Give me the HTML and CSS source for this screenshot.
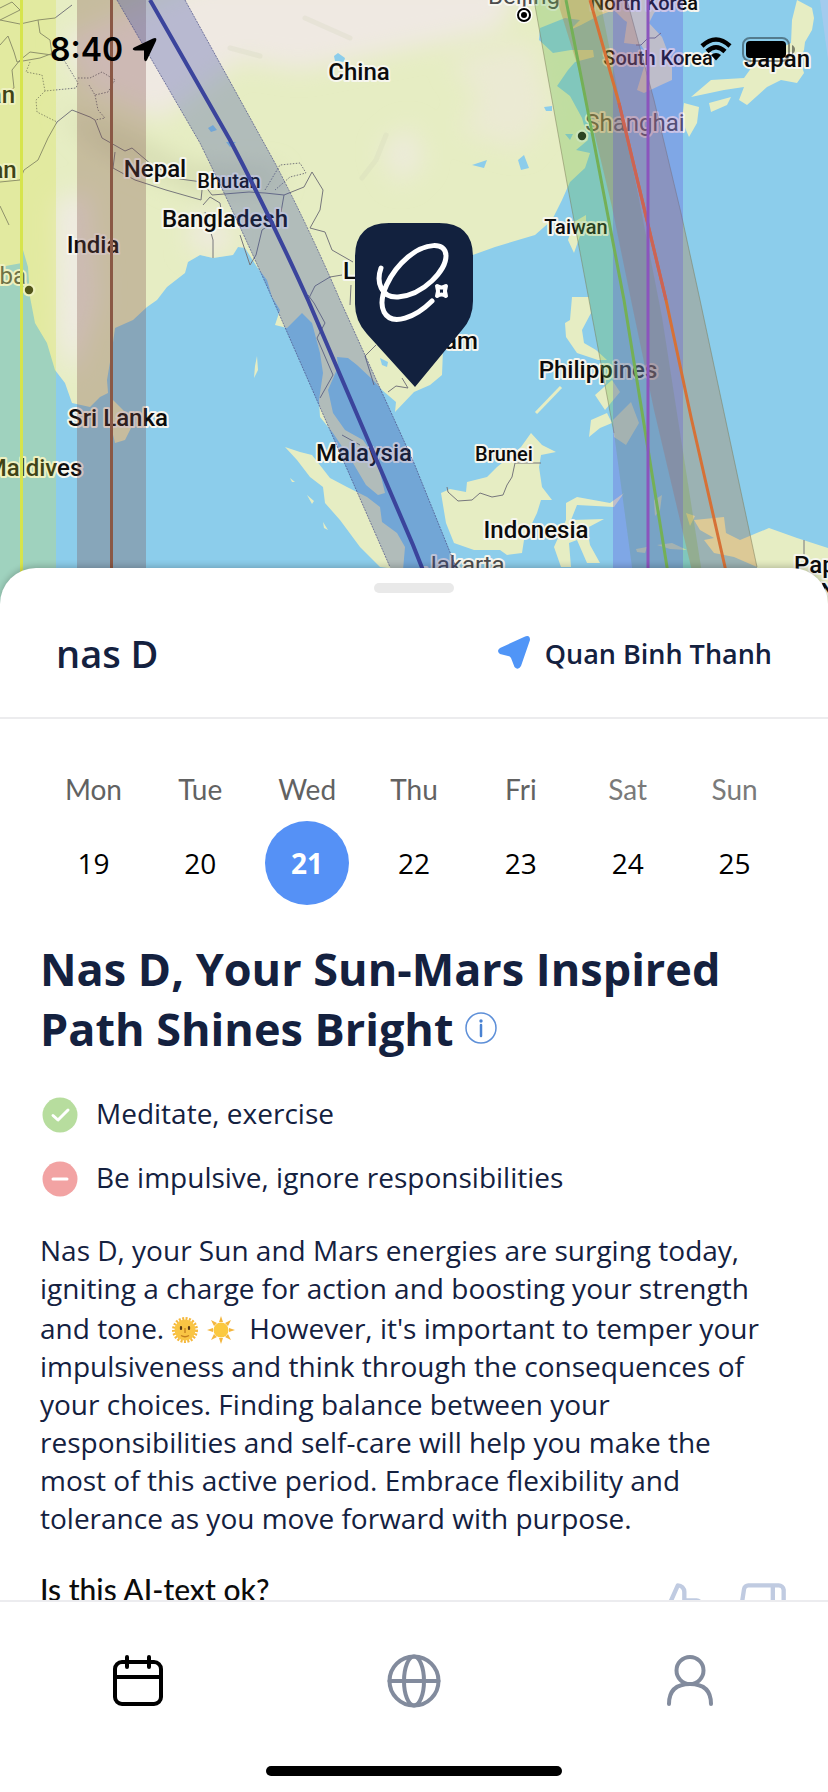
FILE: index.html
```html
<!DOCTYPE html>
<html lang="en">
<head>
<meta charset="utf-8">
<meta name="viewport" content="width=device-width, initial-scale=1">
<title>Daily map</title>
<link rel="stylesheet" href="styles.css">
</head>
<body>
<div class="screen">
  <div class="map">
    <svg class="map-art" viewBox="0 0 828 608" preserveAspectRatio="xMidYMin slice" role="img" aria-label="Map of Asia with planetary lines">
      <defs>
        <filter id="soft" x="-20%" y="-20%" width="140%" height="140%"><feGaussianBlur stdDeviation="12"/></filter>
        <clipPath id="land">
          <path d="M0 0H600L614 10 600 15 581 25 570 30 580 20 565 18 540 28 539 40 553 53 571 50 593 50 594 57 575 62 568 70 557 86 570 96 582 118 588 140 576 150 590 153 585 168 570 182 562 200 552 220 535 235 495 247 470 256 430 260 420 290 443 350 442 375 430 385 414 392 395 412 396 402 382 390 373 380 357 365 348 358 337 357 338 367 328 390 333 413 345 430 363 440 377 460 385 493 378 495 366 485 353 463 333 433 320 417 319 400 323 373 320 353 312 323 302 313 287 328 275 325 280 310 272 297 267 280 257 267 245 248 238 247 233 255 213 258 200 255 188 262 185 273 167 287 157 300 147 307 133 320 115 328 112 350 107 380 108 393 100 397 90 407 72 403 65 383 55 370 47 343 35 323 30 297 28 267 23 250 22 263 0 267Z"/>
        </clipPath>
      </defs>
      <rect width="828" height="608" fill="#8ccdeb"/>
      <g clip-path="url(#land)">
        <rect width="828" height="608" fill="#e6edc3"/>
        <g filter="url(#soft)">
          <path d="M200-20H520L500 30 400 50 300 70 240 60 160 120 90 90 60 40Z" fill="#efe9e2"/>
          <path d="M450 60 530 40 550 110 520 150 460 130 480 100Z" fill="#ebead3"/>
          <path d="M380 150 410 125 425 160 400 185Z" fill="#edebdb"/>
          <path d="M55 200 90 190 100 300 75 380 58 340Z" fill="#efebe2"/>
          <path d="M190 215 230 220 230 255 190 250Z" fill="#eeeade"/>
          <path d="M60 110 100 150 200 195 280 185 275 170 190 165 120 130Z" fill="#d6dcb2"/>
        </g>
        <path d="M305 18 350 38 M386 135 376 160 362 178 M230 48 260 56" fill="none" stroke="#cfd2b8" stroke-width="5" opacity=".25" stroke-linecap="round"/>
      </g>
      <g fill="#e6edc3">
        <path d="M600 0 614 10 624 20 627 22 624 43 641 45 646 53 644 67 637 90 644 93 661 85 672 80 672 63 662 37 649 23 654 13 667 0Z"/>
        <path d="M797 0 812 8 814 18 812 30 805 42 804 50 800 60 804 73 797 83 781 80 767 87 747 105 739 100 744 87 724 90 691 97 711 80 744 78 757 60 791 43 792 20Z"/>
        <path d="M684 103 699 107 697 123 689 137 686 130 682 120ZM709 103 731 97 727 105 711 112Z"/>
        <path d="M586 215 586 225 581 233 574 253 568 240 574 222Z"/>
        <path d="M113 400 125 412 131 428 125 440 115 443 112 430Z"/>
        <path d="M285 447 300 452 312 455 330 478 347 487 367 497 380 507 382 522 397 533 405 547 403 570 380 567 360 547 340 520 325 503 323 487 310 477 297 460Z"/>
        <path d="M441 493 446 523 454 543 474 550 500 550 507 555 522 553 524 540 537 513 541 500 552 500 542 487 539 467 541 455 556 452 542 445 531 433 521 447 497 467 487 477 467 482 466 492 450 489Z"/>
        <path d="M572 297 589 297 591 313 582 330 584 343 596 350 607 360 598 360 577 353 566 337 565 323 570 320ZM591 420 607 413 612 423 600 428 589 437ZM613 420 631 402 639 423 626 445 614 437ZM595 395 612 380 620 392 605 410Z"/>
        <path d="M566 503 577 497 610 503 624 493 614 507 577 505 571 520 604 519 587 528 590 545 600 563 587 563 577 540 569 543 571 567 561 567 554 547 566 520Z"/>
        <path d="M694 520 724 517 726 533 740 540 769 528 797 538 828 548V608H757L757 567 734 557 714 553 704 540 714 538 700 530Z"/>
        <path d="M657 545 672 543 687 550 670 549ZM636 549 647 547 645 553 637 552ZM654 500 662 495 660 510 655 516ZM686 513 695 516 690 526Z"/>
        <path d="M290 478 295 482 292 482ZM307 495 314 501 312 504ZM323 522 328 530 324 528ZM257 356 258 370 254 378 255 366Z"/>
      </g>
      <path d="M561 387 536 413" stroke="#e6edc3" stroke-width="3"/>
      <g fill="#8ccdeb">
        <path d="M334 56 338 53 345 58 344 62 335 61ZM208 128 213 125 217 130 211 132ZM226 142 236 142 230 147ZM518 160 524 155 529 168 521 170ZM472 165 487 160 484 168ZM544 107 552 106 552 111 546 111ZM565 134 573 134 570 140ZM380 358 388 362 387 367 382 365Z"/>
      </g>
      <g fill="none" stroke="#77777c" stroke-width="1">
        <path d="M0 8 12 2 20 10 0 20 20 24 38 20 55 18 72 5M38 20 40 33 50 40 52 55 30 52 20 60 12 70 14 88 4 92M0 45 8 36 14 52 17 62 40 58 56 52"/>
        <path d="M57 122 72 110 90 117 95 120 102 138 125 151 132 148 152 165 180 179 202 182 212 195 249 192 265 193M57 122 48 138 38 160 24 170 20 180 0 182M115 152 113 168 135 180 166 190 201 200 203 180M203 205 210 197 220 203 222 215M205 212 213 240 213 258M0 206 9 225"/>
        <path d="M265 193 284 195 304 187 312 172 323 190 320 210 310 228 325 232 332 250 353 262M284 195 280 218 262 230 256 255 250 265 240 235M308 300 315 286 330 277 342 275M351 285 350 305M308 295 314 303 325 323 317 338 333 375 320 398M342 435 360 445M365 356 376 345M365 356 374 385M388 392 396 386 408 388 402 378"/>
        <path d="M447 487 448 492 458 501 472 500 480 493 492 497 503 495 507 485 512 477 515 463 541 463M804 540V567M636 45 641 45 648 38 655 38 661 33"/>
        <path d="M64 60 78 83 76 88 45 91 36 100 37 112 57 122M78 78 90 78 102 72 115 80 108 92 95 95 89 85M95 95 98 110 105 118 95 120M45 91 42 75 26 72 30 62M265 190 280 165 300 163 306 173 290 177 275 190" stroke-dasharray="1.5 1.5"/>
      </g>
      <g class="map-labels">
        <text x="359" y="80">China</text>
        <text x="155" y="177">Nepal</text>
        <text class="small" x="229" y="188">Bhutan</text>
        <text x="225" y="227">Bangladesh</text>
        <text x="93" y="253">India</text>
        <text x="369" y="279">Laos</text>
        <text x="433" y="349">Vietnam</text>
        <text x="118" y="426">Sri Lanka</text>
        <text x="34" y="476">Maldives</text>
        <text x="364" y="461">Malaysia</text>
        <text x="598" y="378">Philippines</text>
        <text class="small" x="504" y="461">Brunei</text>
        <text x="536" y="538">Indonesia</text>
        <text class="city" x="464" y="573">Jakarta</text>
        <text x="828" y="573">Papua</text>
        <text x="844" y="600">New</text>
        <text class="small" x="576" y="234">Taiwan</text>
        <text class="city" x="635" y="131">Shanghai</text>
        <text class="small" x="658" y="65">South Korea</text>
        <text class="small" x="644" y="10">North Korea</text>
        <text x="777" y="67">Japan</text>
        <text class="city" x="524" y="4">Beijing</text>
        <text x="-50" y="103">Afghanistan</text>
        <text x="-30" y="178">Pakistan</text>
        <text class="city" x="-23" y="284">Ambarba</text>
      </g>
      <g>
        <circle cx="29" cy="290" r="6.5" fill="#f4f6e8"/><circle cx="29" cy="290" r="4.2" fill="#26260f"/>
        <circle cx="582" cy="136" r="6.5" fill="#f4f6e8"/><circle cx="582" cy="136" r="4.2" fill="#111"/>
        <circle cx="524" cy="15" r="8.5" fill="#fff"/><circle cx="524" cy="15" r="6" fill="#fff" stroke="#000" stroke-width="2"/><circle cx="524" cy="15" r="3" fill="#000"/>
      </g>
      <g stroke-width="1">
        <rect x="-4" y="-2" width="60" height="612" fill="#d9e538" fill-opacity=".25"/>
        <rect x="77" y="-2" width="69" height="612" fill="#7d4c48" fill-opacity=".3"/>
        <path d="M117 0 200 143Q240 225 273 300L390 567 406 608H472L456 567 414 463 340 300Q310 230 275 163L185 0Z" fill="#394ba5" fill-opacity=".3"/>
        <path d="M117 0 200 143Q240 225 273 300L390 567M185 0 275 163Q310 230 340 300L414 463 456 567" fill="none" stroke="#4a4f86" stroke-opacity=".7" stroke-dasharray="2 1"/>
        <path d="M534 0 567 183 589 300 614 433 632 567 636 608H708L701 567 662 317 600 0Z" fill="#69b950" fill-opacity=".3"/>
        <path d="M557 0 581 77 612 207 631 300 654 410 691 567 698 608H765L757 567 700 300 681 213 654 100 627 0Z" fill="#c36a24" fill-opacity=".28"/>
        <path d="M627 0 654 100 681 213 700 300 757 567M534 0 567 183 614 433" fill="none" stroke="#7c7c58" stroke-opacity=".5"/>
        <rect x="613" y="-2" width="70" height="612" fill="#6450dc" fill-opacity=".3"/>
        <path d="M820 0H828V60Z" fill="#b9c9f2" fill-opacity=".5"/>
      </g>
      <g fill="none" stroke-width="3">
        <path d="M21.500 0V608" stroke="#d6e44d"/>
        <path d="M111.500 0V608" stroke="#8a5845"/>
        <path d="M150 0 230 140Q272 220 308 300L413 545 438 608" stroke="#3b449c" stroke-width="4"/>
        <path d="M566 0 591 127 624 300 667 567 673 608" stroke="#74b056"/>
        <path d="M590 0 619 103 666 300 691 417 725 567 734 608" stroke="#d67136"/>
        <path d="M619 103 666 300" stroke="#cc6355"/>
        <path d="M648 0V608" stroke="#8b55bd"/>
      </g>
      <path d="M389 223H439Q473 223 473 257V301Q473 318 462 330L415 387 367 334Q355 321 355 304V257Q355 223 389 223Z" fill="#12213e"/>
      <g fill="none" stroke="#fff" stroke-width="5" stroke-linecap="round" stroke-linejoin="round">
        <path d="M381 268C376 282 381 298 398 297C424 295 446 270 446 256C446 241 425 243 408 257C390 272 377 298 384 312C392 327 416 317 432 301"/>
        <path d="M437 286Q441.500 289 446 286Q444 291 446 296Q441.500 293 437 296Q439 291 437 286Z" stroke-width="4"/>
      </g>
    </svg>
    <div class="status">
      <div class="status-time">
        <span>8:40</span>
        <svg width="26" height="26" viewBox="0 0 26 26" aria-hidden="true"><path d="M24 1Q26 1 25 4L16 23Q14 26 13 22V13.500H4Q0 12.500 3 10.500L22 1.500Z" fill="#000"/></svg>
      </div>
      <div class="status-icons">
        <svg width="32" height="24" viewBox="0 0 32 24" aria-hidden="true"><g fill="none" stroke="#000" stroke-width="4.500"><path d="M2 9Q16-4 30 9"/><path d="M7 14.500Q16 6 25 14.500"/></g><path d="M11 18Q16 14 21 18L16 23.500Z"/></svg>
        <svg width="54" height="26" viewBox="0 0 54 26" aria-hidden="true"><rect x="1" y="1" width="46" height="23" rx="7" fill="none" stroke="#000" stroke-opacity=".4" stroke-width="2"/><rect x="4" y="4" width="40" height="17" rx="4"/><path d="M50 8Q53 9.500 53 12.500T50 17Z" fill-opacity=".45"/></svg>
      </div>
    </div>
  </div>

  <main class="sheet">
    <div class="handle"></div>
    <header class="profile">
      <h1 class="name">nas D</h1>
      <button class="place" type="button">
        <svg width="34" height="36" viewBox="0 0 34 36" aria-hidden="true"><path d="M27 2Q33-1 33 5L24 31Q21 36 17.500 32L14 23Q13 21 11 21L3 19Q-1 16 3 13Z" fill="#5095f7"/></svg>
        <span>Quan Binh Thanh</span>
      </button>
    </header>

    <div class="scroll">
      <div class="week">
        <button class="day" type="button"><span class="weekday">Mon</span><span class="date">19</span></button>
        <button class="day" type="button"><span class="weekday">Tue</span><span class="date">20</span></button>
        <button class="day" type="button" aria-current="date"><span class="weekday">Wed</span><span class="date selected">21</span></button>
        <button class="day" type="button"><span class="weekday">Thu</span><span class="date">22</span></button>
        <button class="day" type="button"><span class="weekday">Fri</span><span class="date">23</span></button>
        <button class="day" type="button"><span class="weekday weekend">Sat</span><span class="date">24</span></button>
        <button class="day" type="button"><span class="weekday weekend">Sun</span><span class="date">25</span></button>
      </div>

      <article class="reading">
        <h2 class="title">Nas D, Your Sun-Mars Inspired Path Shines Bright
          <button class="info" type="button" aria-label="More information"><svg width="32" height="32" viewBox="0 0 32 32" aria-hidden="true"><circle cx="16" cy="16" r="15" fill="none" stroke="#5d8fd8" stroke-width="1.500"/><circle cx="16" cy="9" r="1.700" fill="#4a82d2"/><path d="M16 13V24" stroke="#4a82d2" stroke-width="2.500" stroke-linecap="round"/></svg></button>
        </h2>
        <ul class="tips">
          <li class="tip"><svg width="36" height="36" viewBox="0 0 36 36" aria-hidden="true"><circle cx="18" cy="18" r="17.500" fill="#b7dd9e"/><path d="M11 18.500 16 23 26 13" fill="none" stroke="#fff" stroke-width="3" stroke-linecap="round" stroke-linejoin="round"/></svg><span>Meditate, exercise</span></li>
          <li class="tip"><svg width="36" height="36" viewBox="0 0 36 36" aria-hidden="true"><circle cx="18" cy="18" r="17.500" fill="#f2a3a3"/><path d="M11 18H25" stroke="#fff" stroke-width="3" stroke-linecap="round"/></svg><span>Be impulsive, ignore responsibilities</span></li>
        </ul>
        <p class="body">Nas D, your Sun and Mars energies are surging today, igniting a charge for action and boosting your strength and tone. <svg class="emoji" viewBox="0 0 28 28" role="img" aria-label="Sun with face"><circle cx="14" cy="14" r="11.500" fill="none" stroke="#f5b83d" stroke-width="3" stroke-dasharray="2 1.400"/><circle cx="14" cy="14" r="10.500" fill="#f9c544"/><path d="M10 11V13M18 11V13" stroke="#5a3a14" stroke-width="2.200" stroke-linecap="round"/><path d="M14 12V17M10 19.500Q14 22 18 19.500" fill="none" stroke="#c47f1d" stroke-width="1.300"/></svg> <svg class="emoji" viewBox="0 0 28 28" role="img" aria-label="Sun"><path d="M14 0 16 6H12ZM14 28 12 22H16ZM0 14 6 12V16ZM28 14 22 16V12ZM4 4 10 7 7 10ZM24 4 21 10 18 7ZM4 24 7 18 10 21ZM24 24 18 21 21 18Z" fill="#f3b63f"/><circle cx="14" cy="14" r="7.500" fill="#fbc93f"/></svg>&nbsp; However, it's important to temper your impulsiveness and think through the consequences of your choices. Finding balance between your responsibilities and self-care will help you make the most of this active period. Embrace flexibility and tolerance as you move forward with purpose.</p>
        <div class="feedback">
          <span class="question">Is this AI-text ok?</span>
          <div class="votes">
            <button class="vote" type="button" aria-label="Good"><svg viewBox="0 0 24 24" aria-hidden="true"><path d="M14 9V5a3 3 0 0 0-3-3l-4 9v11h11.280a2 2 0 0 0 2-1.700l1.380-9a2 2 0 0 0-2-2.300zM7 22H4a2 2 0 0 1-2-2v-7a2 2 0 0 1 2-2h3"/></svg></button>
            <button class="vote" type="button" aria-label="Bad"><svg viewBox="0 0 24 24" aria-hidden="true"><path d="M10 15v4a3 3 0 0 0 3 3l4-9V2H5.720a2 2 0 0 0-2 1.700l-1.380 9a2 2 0 0 0 2 2.300zm7-13h2.670A2.310 2.310 0 0 1 22 4v7a2.310 2.310 0 0 1-2.330 2H17"/></svg></button>
          </div>
        </div>
      </article>
    </div>
  </main>

  <nav class="tabs">
    <button class="tab active" type="button" aria-label="Calendar"><svg viewBox="0 0 56 56" aria-hidden="true"><rect x="5" y="9" width="46" height="42" rx="7"/><path d="M5 24H51M17 4V14M39 4V14"/></svg></button>
    <button class="tab" type="button" aria-label="World"><svg viewBox="0 0 56 56" aria-hidden="true"><circle cx="28" cy="28" r="24.500"/><ellipse cx="28" cy="28" rx="10" ry="24.500"/><path d="M3.500 28H52.500"/></svg></button>
    <button class="tab" type="button" aria-label="Profile"><svg viewBox="0 0 56 56" aria-hidden="true"><circle cx="28" cy="17.500" r="13.500"/><path d="M7 51Q7 31 28 31T49 51"/></svg></button>
  </nav>
  <div class="home-bar"></div>
</div>
</body>
</html>
```
FILE: styles.css
```css
* { box-sizing: border-box; }

body {
  margin: 0;
  background: #fff;
  color: #14213f;
  font-family: "Open Sans", "Noto Sans", sans-serif;
}

button {
  margin: 0;
  padding: 0;
  border: 0;
  background: none;
  color: inherit;
  font: inherit;
}

svg { display: block; }

.screen {
  position: relative;
  display: flex;
  flex-direction: column;
  height: 100vh;
  overflow: hidden;
}

/* Map */
.map {
  position: relative;
  flex: none;
}

.map-art {
  width: 100%;
  height: 608px;
}

.map-labels text {
  font-family: Roboto, sans-serif;
  font-size: 24px;
  font-weight: 500;
  text-anchor: middle;
  fill: #0c0c0c;
  stroke: #f6f6ee;
  stroke-width: 4px;
  stroke-linejoin: round;
  paint-order: stroke;
}

.map-labels .small { font-size: 20px; }

.map-labels .city {
  font-weight: 400;
  fill: #4c4c4c;
}

.status {
  position: absolute;
  top: 28px;
  left: 0;
  right: 0;
  display: flex;
  justify-content: space-between;
  align-items: center;
  padding: 0 32px 0 50px;
  height: 44px;
}

.status-time {
  display: flex;
  align-items: center;
  gap: 8px;
  color: #000;
  font-family: Inter, sans-serif;
  font-size: 32px;
  font-weight: 600;
  line-height: 44px;
}

.status-icons {
  display: flex;
  gap: 10px;
}

/* Bottom sheet */
.sheet {
  position: relative;
  display: flex;
  flex: 1;
  flex-direction: column;
  min-height: 0;
  margin-top: -40px;
  border-radius: 36px 36px 0 0;
  background: #fff;
  box-shadow: 0 -2px 6px rgba(0, 0, 0, .2);
}

.handle {
  flex: none;
  width: 80px;
  height: 10px;
  margin: 15px auto 0;
  border-radius: 5px;
  background: #e9e9e9;
}

.profile {
  display: flex;
  flex: none;
  align-items: center;
  justify-content: space-between;
  height: 126px;
  padding: 0 56px 4px;
  border-bottom: 2px solid #ececee;
}

.name {
  margin: 0;
  font-size: 38px;
  font-weight: 600;
}

.place {
  display: flex;
  align-items: center;
  gap: 14px;
  font-size: 27px;
  font-weight: 600;
}

.scroll {
  flex: 1;
  min-height: 0;
  overflow: hidden;
}

.week {
  display: grid;
  grid-template-columns: repeat(7, 1fr);
  padding: 46px 40px 0;
}

.day {
  display: flex;
  flex-direction: column;
  align-items: center;
  gap: 8px;
}

.weekday {
  color: #626262;
  font-family: Lato, sans-serif;
  font-size: 28px;
  line-height: 48px;
}

.weekend { color: #7a7a7a; }

.date {
  width: 84px;
  height: 84px;
  border-radius: 50%;
  color: #000;
  font-size: 28px;
  line-height: 84px;
}

.selected {
  background: #5591f6;
  color: #fff;
  font-weight: 700;
}

.reading { padding: 34px 40px 0; }

.title {
  margin: 0;
  font-size: 45px;
  font-weight: 700;
  line-height: 60px;
}

.info {
  display: inline-block;
  padding-bottom: 12px;
  vertical-align: middle;
}

.tips {
  display: flex;
  flex-direction: column;
  gap: 28px;
  margin: 38px 0 0;
  padding: 0 2px;
  list-style: none;
}

.tip {
  display: flex;
  align-items: center;
  gap: 18px;
  height: 36px;
  font-size: 28px;
  line-height: 36px;
}

.tip span { padding-bottom: 4px; }

.body {
  margin: 34px 0 0;
  padding-right: 20px;
  font-size: 28px;
  line-height: 38px;
}

.emoji {
  display: inline-block;
  width: 28px;
  height: 28px;
  margin-top: 9px;
  vertical-align: -5px;
}

.feedback {
  display: flex;
  align-items: flex-start;
  justify-content: space-between;
  margin-top: 32px;
}

.question {
  color: #0c0c0c;
  font-family: Lato, sans-serif;
  font-size: 30px;
  font-weight: 500;
  line-height: 40px;
}

.votes {
  display: flex;
  gap: 30px;
  padding-top: 12px;
}

.vote svg {
  width: 52px;
  height: 52px;
  fill: none;
  stroke: #c0cbe1;
  stroke-width: 2;
  stroke-linejoin: round;
}

/* Tab bar */
.tabs {
  position: relative;
  display: grid;
  flex: none;
  grid-template-columns: repeat(3, 1fr);
  height: 166px;
  padding-bottom: 6px;
  border-top: 2px solid #ececef;
  background: #fff;
}

.tab {
  display: flex;
  align-items: center;
  justify-content: center;
  color: #828b9d;
}

.tab svg {
  width: 56px;
  height: 56px;
  fill: none;
  stroke: currentColor;
  stroke-width: 4;
  stroke-linecap: round;
}

.tab.active { color: #000; }

.home-bar {
  flex: none;
  width: 296px;
  height: 10px;
  margin: 0 auto 16px;
  border-radius: 5px;
  background: #000;
}
```
